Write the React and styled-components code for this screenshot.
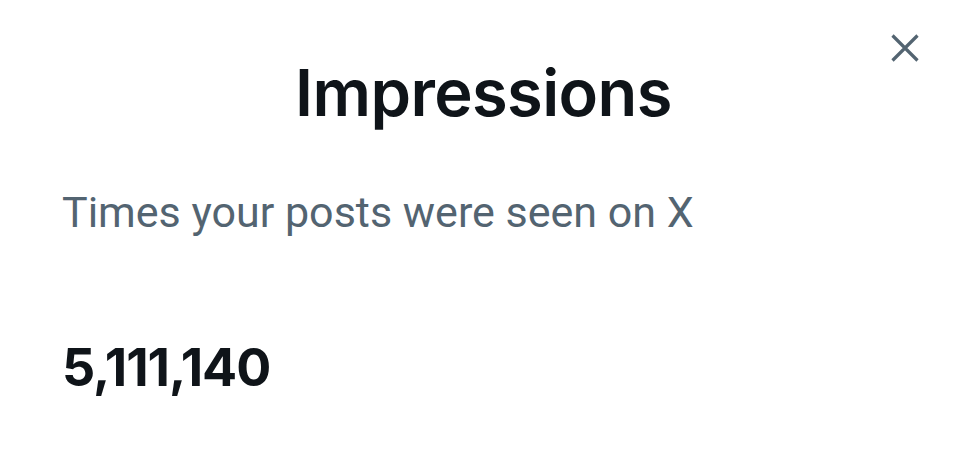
import React from "react";
import styled, { createGlobalStyle } from "styled-components";

const GlobalStyle = createGlobalStyle`
  html, body {
    margin: 0;
    padding: 0;
    background: #ffffff;
  }
  body {
    font-family: Inter, "Noto Sans", sans-serif;
    -webkit-font-smoothing: antialiased;
  }
`;

const Sheet = styled.div`
  position: relative;
  width: 967px;
  height: 454px;
  box-sizing: border-box;
  padding: 50px 62px 0 62px;
  display: flex;
  flex-direction: column;
  background: #ffffff;
`;

const Header = styled.header`
  display: flex;
  justify-content: center;
  align-items: center;
  height: 84px;
`;

const Title = styled.h1`
  margin: 0;
  font-family: Inter, "Noto Sans", sans-serif;
  font-size: 65px;
  font-weight: 600;
  letter-spacing: -0.6px;
  color: #0f1419;
`;

const CloseButton = styled.button`
  position: absolute;
  top: 28px;
  right: 42px;
  width: 40px;
  height: 40px;
  padding: 0;
  border: 0;
  background: transparent;
  display: flex;
  align-items: center;
  justify-content: center;
  cursor: pointer;
`;

const Subtitle = styled.p`
  margin: 53px 0 0 0;
  font-family: Roboto, "Noto Sans", sans-serif;
  font-size: 43px;
  font-weight: 400;
  color: #536471;
  line-height: 1.2;
`;

const Count = styled.div`
  margin-top: 97px;
  font-family: Inter, "Noto Sans", sans-serif;
  font-size: 52px;
  font-weight: 700;
  letter-spacing: -1px;
  color: #0f1419;
`;

function CloseIcon() {
  return (
    <svg width="32" height="32" viewBox="0 0 32 32" fill="none">
      <path d="M3.5 3.5 L28.5 28.5 M28.5 3.5 L3.5 28.5" stroke="#536471" strokeWidth="3.2" strokeLinecap="butt" />
    </svg>
  );
}

export default function App() {
  return (
    <>
      <GlobalStyle />
      <Sheet>
        <Header>
          <Title>Impressions</Title>
        </Header>
        <CloseButton aria-label="Close">
          <CloseIcon />
        </CloseButton>
        <Subtitle>Times your posts were seen on X</Subtitle>
        <Count>5,111,140</Count>
      </Sheet>
    </>
  );
}
